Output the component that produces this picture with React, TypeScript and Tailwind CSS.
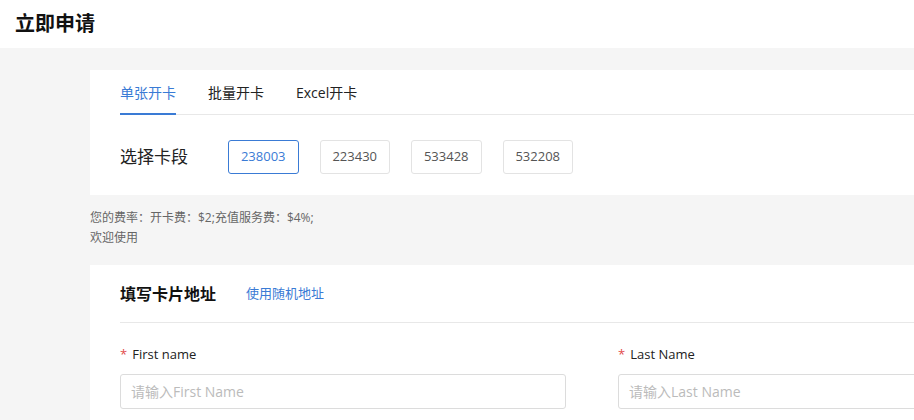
import React from "react";

const font = { fontFamily: '"Open Sans", "Noto Sans CJK SC", sans-serif' };

export default function App() {
  const segs = ["238003", "223430", "533428", "532208"];
  return (
    <div className="w-[914px] h-[420px] overflow-hidden bg-[#f5f5f5] text-[#222]" style={font}>
      <div className="h-[48px] bg-white flex items-center px-[15px]">
        <h1 className="text-[20px] font-bold text-[#111] leading-none">立即申请</h1>
      </div>
      <div className="pl-[90px] pt-[22px]">
        <div className="bg-white pl-[30px] h-[125px]">
          <div className="flex gap-[32px] border-b border-[#e8e8e8] h-[45px]">
            <div className="text-[14px] text-[#3a7bd5] pt-[12px] border-b-2 border-[#3a7bd5] h-[45px] -mb-px">单张开卡</div>
            <div className="text-[14px] text-[#222] pt-[12px]">批量开卡</div>
            <div className="text-[14px] text-[#222] pt-[12px]">Excel开卡</div>
          </div>
          <div className="flex items-center mt-[25px]">
            <div className="text-[17px] text-[#222] w-[108px]">选择卡段</div>
            <div className="flex gap-[21px]">
              {segs.map((s, i) => (
                <div
                  key={s}
                  className={
                    i === 0
                      ? "w-[70.5px] h-[34px] flex items-center justify-center rounded-[3px] border border-[#3a7bd5] text-[#3a7bd5] text-[13px]"
                      : "w-[70.5px] h-[34px] flex items-center justify-center rounded-[3px] border border-[#e3e3e3] text-[#555] text-[13px]"
                  }
                >
                  {s}
                </div>
              ))}
            </div>
          </div>
        </div>
        <div className="pt-[13px] text-[12px] text-[#666] leading-[20px] h-[70px]">
          <div>您的费率：开卡费：$2;充值服务费：$4%;</div>
          <div>欢迎使用</div>
        </div>
        <div className="bg-white pl-[30px] h-[160px]">
          <div className="flex items-center h-[58px] border-b border-[#e8e8e8]">
            <div className="text-[16px] font-bold text-[#111] w-[126px]">填写卡片地址</div>
            <div className="text-[13px] text-[#3a7bd5]">使用随机地址</div>
          </div>
          <div className="flex gap-[52px] pt-[22px]">
            <div className="w-[446px] shrink-0">
              <div className="text-[13px] text-[#222] h-[20px] flex items-center">
                <span className="text-[#e24c4c] mr-[5px]">*</span>First name
              </div>
              <div className="mt-[9px] h-[35px] border border-[#dcdcdc] rounded-[3px] flex items-center px-[10px] text-[14px] text-[#bbb]">
                请输入First Name
              </div>
            </div>
            <div className="w-[446px] shrink-0">
              <div className="text-[13px] text-[#222] h-[20px] flex items-center">
                <span className="text-[#e24c4c] mr-[5px]">*</span>Last Name
              </div>
              <div className="mt-[9px] h-[35px] border border-[#dcdcdc] rounded-[3px] flex items-center px-[10px] text-[14px] text-[#bbb]">
                请输入Last Name
              </div>
            </div>
          </div>
        </div>
      </div>
    </div>
  );
}
